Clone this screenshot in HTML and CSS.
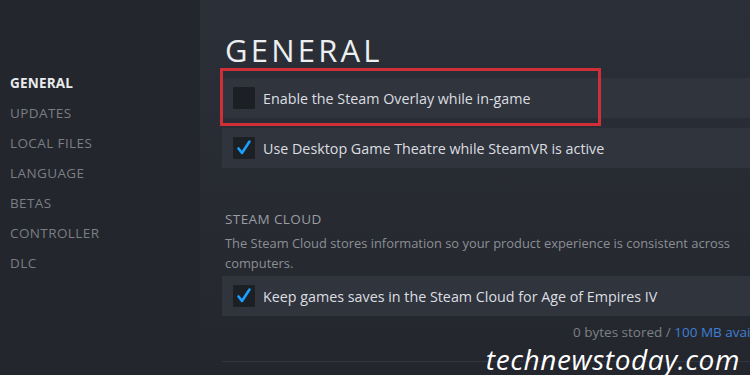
FILE: index.html
```html
<!doctype html>
<html>
<head>
<meta charset="utf-8">
<title>Properties - General</title>
<link rel="stylesheet" href="styles.css">
</head>
<body>
<div class="page">
    <div class="sidebar">
        <a class="on">GENERAL</a>
        <a>UPDATES</a>
        <a>LOCAL FILES</a>
        <a>LANGUAGE</a>
        <a>BETAS</a>
        <a>CONTROLLER</a>
        <a>DLC</a>
    </div>

    <div class="content">
        <h1>GENERAL</h1>
        <label class="row">
            <span class="box"></span>
            <span>Enable the Steam Overlay while in-game</span>
        </label>
        <label class="row">
            <span class="box">
                <svg width="22" height="22" viewBox="0 0 22 22"><path d="M5.5 11.5 L9 16 L16.5 4.5" fill="none" stroke="#1a9fff" stroke-width="2.6" stroke-linecap="round" stroke-linejoin="round"/></svg>
            </span>
            <span>Use Desktop Game Theatre while SteamVR is active</span>
        </label>

        <h2>STEAM CLOUD</h2>
        <p class="desc">The Steam Cloud stores information so your product experience is consistent across computers.</p>
        <label class="row">
            <span class="box">
                <svg width="22" height="22" viewBox="0 0 22 22"><path d="M5.5 11.5 L9 16 L16.5 4.5" fill="none" stroke="#1a9fff" stroke-width="2.6" stroke-linecap="round" stroke-linejoin="round"/></svg>
            </span>
            <span>Keep games saves in the Steam Cloud for Age of Empires IV</span>
        </label>
        <div class="stored">0 bytes stored / <span class="avail">100 MB available</span></div>
        <div class="sep"></div>

        <!-- annotation -->
        <div class="mark"></div>
    </div>
</div>
<div class="watermark">technewstoday.com</div>
</body>
</html>
```

FILE: styles.css
```css
body { margin:0; width:750px; height:375px; overflow:hidden; background:#23262d; font-family:"Open Sans","Noto Sans",sans-serif; position:relative; }

.page { display:flex; height:375px; }

.sidebar { width:200px; background:#23262c; padding:68px 0 0 10px; box-sizing:border-box; display:flex; flex-direction:column; }
.sidebar a { display:block; height:30px; line-height:30px; font-size:13.5px; letter-spacing:0.4px; color:#7b7e84; }
.sidebar a.on { color:#e9eaec; font-weight:700; letter-spacing:0.2px; }

.content { flex:1; position:relative; padding-left:22px; background:linear-gradient(180deg,#2b2f38 0%,#272a31 60%,#23262c 100%); overflow:hidden; }

h1 { margin:28px 0 0 3px; height:50px; line-height:44px; font-size:31px; font-weight:400; letter-spacing:3.2px; color:#eceef0; }

.row { display:flex; align-items:center; height:40px; padding-left:11px; background:#30343d; color:#dcdee1; font-size:14.3px; margin-bottom:10px; white-space:nowrap; }
.row .box { width:22px; height:22px; background:#1c1f24; margin-right:8px; flex-shrink:0; border-radius:1px; }
.row .box svg { display:block; }

h2 { margin:41px 0 0 3px; font-size:13.5px; font-weight:400; letter-spacing:0.4px; color:#9a9da3; line-height:20px; }
.desc { margin:4px 0 3px 3px; font-size:12.9px; line-height:20px; color:#8c8f95; width:510px; }
.content .row:last-of-type { margin-bottom:0; }

.stored { margin:6px 0 0 351px; white-space:nowrap; font-size:13.5px; color:#7d8087; line-height:20px; }
.stored .avail { color:#3f7fd6; }

.sep { height:1px; background:#33363e; margin-top:19px; }

.mark { position:absolute; left:20px; top:68px; width:375px; height:52px; border:3px solid #d12f38; }

.watermark { position:absolute; right:10px; bottom:2px; font-size:28px; font-style:italic; color:#ffffff; letter-spacing:0.6px; line-height:28px; }
```
